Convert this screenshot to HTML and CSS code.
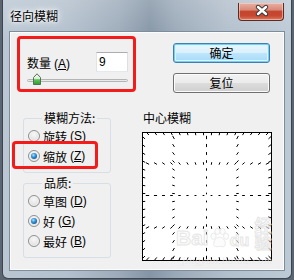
FILE: index.html
```html
<!DOCTYPE html>
<html>
  <head>
    <meta charset="utf-8">
    <link rel="stylesheet" href="styles.css">
  </head>
  <body>
    <div class="window">
      <div class="titlebar">
        <span class="title">径向模糊</span>
        <div class="close-btn">
          <svg width="44" height="16" viewBox="0 0 44 16">
            <path d="M19,4 L27,11 M27,4 L19,11" stroke="#3b3b3b" stroke-width="4.4" stroke-linecap="round" fill="none"/>
            <path d="M19,4 L27,11 M27,4 L19,11" stroke="#fff" stroke-width="2.4" stroke-linecap="round" fill="none"/>
          </svg>
        </div>
      </div>
      <div class="frame">
        <div class="client">
          <div class="left-col">
            <div class="amount-box">
              <div class="amount-row">
                <span class="amount-label">数量<span class="key">(<u>A</u>)</span></span>
                <input class="amount-input" type="text" value="9">
              </div>
              <div class="slider">
                <div class="slider-track"></div>
                <svg class="slider-thumb" width="8" height="12" viewBox="0 0 8 12">
                  <defs>
                    <linearGradient id="thumbFill" x1="0" y1="0" x2="0" y2="1">
                      <stop offset="0" stop-color="#f4fbf2"/>
                      <stop offset="0.45" stop-color="#d6efd0"/>
                      <stop offset="0.55" stop-color="#5fc45a"/>
                      <stop offset="1" stop-color="#2f9a2c"/>
                    </linearGradient>
                  </defs>
                  <path d="M0.5,4.5 L4,0.8 L7.5,4.5 L7.5,11.5 L0.5,11.5 Z" fill="url(#thumbFill)" stroke="#55705a" stroke-width="1"/>
                </svg>
              </div>
            </div>

            <fieldset class="group">
              <legend>模糊方法:</legend>
              <div class="radio-row"><span class="radio"></span>旋转<span class="key">(<u>S</u>)</span></div>
              <div class="radio-row"><span class="radio checked"></span>缩放<span class="key">(<u>Z</u>)</span></div>
            </fieldset>

            <fieldset class="group quality">
              <legend>品质:</legend>
              <div class="radio-row"><span class="radio"></span>草图<span class="key">(<u>D</u>)</span></div>
              <div class="radio-row"><span class="radio checked"></span>好<span class="key">(<u>G</u>)</span></div>
              <div class="radio-row"><span class="radio"></span>最好<span class="key">(<u>B</u>)</span></div>
            </fieldset>
          </div>

          <div class="right-col">
            <div class="buttons">
              <div class="btn default">确定</div>
              <div class="btn">复位</div>
            </div>
            <div class="center-label">中心模糊</div>
            <div class="preview">
              <svg id="preview" width="128" height="127"></svg>
            </div>
          </div>

          <!-- red annotation over the zoom radio -->
          <div class="mark"></div>

          <div class="watermark">
            <div class="wm-logo">
              <span class="wm-bai">Bai</span>
              <svg class="wm-paw" width="22" height="24" viewBox="0 0 22 24">
                <g fill="#fbfbfb" stroke="#dedede" stroke-width="1">
                  <ellipse cx="4" cy="10" rx="3" ry="3.6"/>
                  <ellipse cx="8.5" cy="4.5" rx="3" ry="3.6"/>
                  <ellipse cx="14.5" cy="4.5" rx="3" ry="3.6"/>
                  <ellipse cx="18.5" cy="10" rx="3" ry="3.6"/>
                  <path d="M11,11 C6,11 3,18 5,21 C7,23 9,21.5 11,21.5 C13,21.5 15,23 17,21 C19,18 16,11 11,11 Z"/>
                </g>
              </svg>
              <span class="wm-du">du</span>
              <span class="wm-jy">经验</span>
            </div>
            <div class="wm-url">jingyan.baidu.com</div>
          </div>
        </div>
      </div>
    </div>

    <script type="text/javascript">
    var ns = "http://www.w3.org/2000/svg";
    var svg = document.getElementById("preview");
    var w = 128, h = 127;
    var cx = 63.5, cy = 62.5;

    // grid lines of the preview, inner coords
    var xs = [0.5, 30.5, 63.5, 94.5, 127];
    var ys = [0.5, 30.5, 62.5, 94.5, 126];

    function dash(x, y) {
      var dx = x - cx, dy = y - cy;
      var d = Math.sqrt(dx * dx + dy * dy);
      if (d < 2) return;
      var len = 1.6 + d * 0.03;
      var ux = dx / d * len / 2, uy = dy / d * len / 2;
      var l = document.createElementNS(ns, "line");
      l.setAttribute("x1", x - ux);
      l.setAttribute("y1", y - uy);
      l.setAttribute("x2", x + ux);
      l.setAttribute("y2", y + uy);
      svg.appendChild(l);
    }

    for (var i = 0; i < xs.length; i++) {
      for (var y = 4.5; y < h; y += 8) dash(xs[i], y);
    }
    for (var j = 0; j < ys.length; j++) {
      for (var x = 4.5; x < w; x += 8) dash(x, ys[j]);
    }
    </script>
  </body>
</html>
```

FILE: styles.css
```css
body {
  margin: 0;
  width: 294px;
  height: 280px;
  overflow: hidden;
  background: #5b6572;
  font: 12px "Noto Sans CJK SC", "Liberation Sans", sans-serif;
  color: #000;
}

/* window frame */
.window {
  margin: 0 2px;
  width: 290px;
  height: 279px;
  box-sizing: border-box;
  border: 1px solid #3c4550;
  border-top: none;
  border-radius: 0 0 6px 6px;
  display: flex;
  flex-direction: column;
  background:
    linear-gradient(180deg, rgba(255,255,255,0.18), rgba(255,255,255,0) 40px),
    linear-gradient(90deg, #bac7d3 0%, #b3c0cd 22%, #9dabba 40%, #8595a6 51%, #9aa9b8 60%, #b2bfcc 78%, #bccad6 100%);
}

.titlebar {
  height: 31px;
  display: flex;
  align-items: flex-start;
}

.title {
  margin: 9px 0 0 7px;
  line-height: 14px;
  text-shadow: 0 0 6px #fff, 0 0 3px #fff, 0 0 10px rgba(255,255,255,0.8);
}

.close-btn {
  margin: 3px 7px 0 auto;
  width: 46px;
  height: 18px;
  box-sizing: border-box;
  border: 1px solid #5b2a22;
  border-top: none;
  border-radius: 0 0 4px 4px;
  background: linear-gradient(180deg, #e9b0a2 0%, #d98a78 40%, #c44630 50%, #c7472f 75%, #dc7a5e 100%);
  box-shadow: inset 0 0 0 1px rgba(255,220,210,0.55);
}

.close-btn svg {
  display: block;
}

.frame {
  flex: 1;
  padding: 0 6px 7px 6px;
}

.client {
  position: relative;
  width: 276px;
  height: 240px;
  box-sizing: border-box;
  border: 1px solid #7f8c99;
  box-shadow: inset 0 0 0 1px #fbfcfd;
  background: #f0f0f0;
  display: flex;
  align-items: flex-start;
  padding: 4px 0 0 7px;
}

.key {
  font-family: "Liberation Sans", sans-serif;
  margin-left: 3px;
}

/* left column */
.left-col {
  width: 119px;
}

.amount-box {
  width: 119px;
  height: 56px;
  box-sizing: border-box;
  border: 3px solid #f41b1b;
  border-radius: 4px;
  padding: 13px 5px 4px 7px;
}

.amount-row {
  display: flex;
  align-items: center;
  height: 20px;
}

.amount-label {
  flex: 1;
}

.amount-input {
  width: 32px;
  height: 20px;
  box-sizing: border-box;
  margin: 0;
  padding: 0 0 0 2px;
  border: 1px solid;
  border-color: #abadb3 #dbdfe6 #e3e9ef #e2e3ea;
  background: #fff;
  font: 12px "Liberation Sans", sans-serif;
  outline: none;
}

.slider {
  position: relative;
  margin-top: 1px;
  width: 101px;
  height: 12px;
}

.slider-track {
  position: absolute;
  left: 0;
  right: 0;
  top: 6px;
  height: 3px;
  box-sizing: border-box;
  border: 1px solid #b4b4b4;
  border-radius: 2px;
  background: #e7eaea;
}

.slider-thumb {
  position: absolute;
  left: 6px;
  top: 0;
}

.group {
  margin: 19px 0 0 6px;
  width: 88px;
  box-sizing: border-box;
  border: 1px solid #d5dfe5;
  border-radius: 3px;
  padding: 1px 0 6px 4px;
}

.group.quality {
  margin-top: 3px;
}

.group legend {
  margin-left: 14px;
  padding: 0 2px;
  line-height: 14px;
}

.radio-row {
  display: flex;
  align-items: center;
  gap: 3px;
  height: 20px;
  white-space: nowrap;
}

.radio-row .key {
  margin-left: 0;
}

.radio {
  width: 12px;
  height: 12px;
  box-sizing: border-box;
  border-radius: 50%;
  border: 1px solid #8e8f8f;
  background: radial-gradient(circle at 50% 35%, #f8f8f8 0%, #e6e6e6 55%, #cfcfcf 100%);
  box-shadow: inset 0 0 0 1px #f4f4f4;
  display: flex;
  align-items: center;
  justify-content: center;
}

.radio.checked::after {
  content: "";
  width: 6px;
  height: 6px;
  border-radius: 50%;
  background: radial-gradient(circle at 40% 35%, #b9e4ff 0%, #3a9ae0 35%, #145e9e 75%, #0c3f70 100%);
}

/* right column */
.right-col {
  margin-left: 6px;
  width: 130px;
  padding-top: 7px;
}

.buttons {
  padding-left: 31px;
  display: flex;
  flex-direction: column;
  gap: 10px;
}

.btn {
  width: 97px;
  height: 20px;
  box-sizing: border-box;
  border: 1px solid #707070;
  border-radius: 3px;
  text-align: center;
  line-height: 18px;
  background: linear-gradient(180deg, #f2f2f2 0%, #ebebeb 50%, #dddddd 50%, #cfcfcf 100%);
  box-shadow: inset 0 0 0 1px #fbfbfb;
}

.btn.default {
  border-color: #3c7fb1;
  background: linear-gradient(180deg, #eaf6fd 0%, #d9f0fc 50%, #bee6fd 50%, #a7d9f5 100%);
  box-shadow: inset 0 0 0 1px #6fd1f6, inset 0 0 0 2px #dff3fc;
}

.center-label {
  margin-top: 18px;
  padding-left: 1px;
  line-height: 14px;
}

.preview {
  margin-top: 7px;
  width: 130px;
  height: 129px;
  box-sizing: border-box;
  border: 1px solid #000;
  background: #fff;
}

.preview svg {
  display: block;
  stroke: #000;
  stroke-width: 1;
}

/* annotation */
.mark {
  position: absolute;
  left: 2px;
  top: 109px;
  width: 86px;
  height: 28px;
  box-sizing: border-box;
  border: 3px solid #f41b1b;
  border-radius: 4px;
}

/* site watermark */
.watermark {
  position: absolute;
  left: 166px;
  top: 190px;
  opacity: 0.7;
  pointer-events: none;
}

.wm-logo {
  display: flex;
  align-items: flex-end;
  gap: 1px;
  height: 28px;
}

.wm-bai,
.wm-du,
.wm-jy {
  font-weight: bold;
  color: #fbfbfb;
  -webkit-text-stroke: 1px #dcdcdc;
  line-height: 1;
}

.wm-bai {
  font: bold 21px "Liberation Sans", sans-serif;
}

.wm-du {
  font: bold 16px "Liberation Sans", sans-serif;
}

.wm-jy {
  margin-left: 4px;
  font-size: 17px;
}

.wm-url {
  margin: 4px 0 0 6px;
  font: italic 11px "Liberation Serif", serif;
  color: #e8e8e8;
  letter-spacing: 0.5px;
}
```
